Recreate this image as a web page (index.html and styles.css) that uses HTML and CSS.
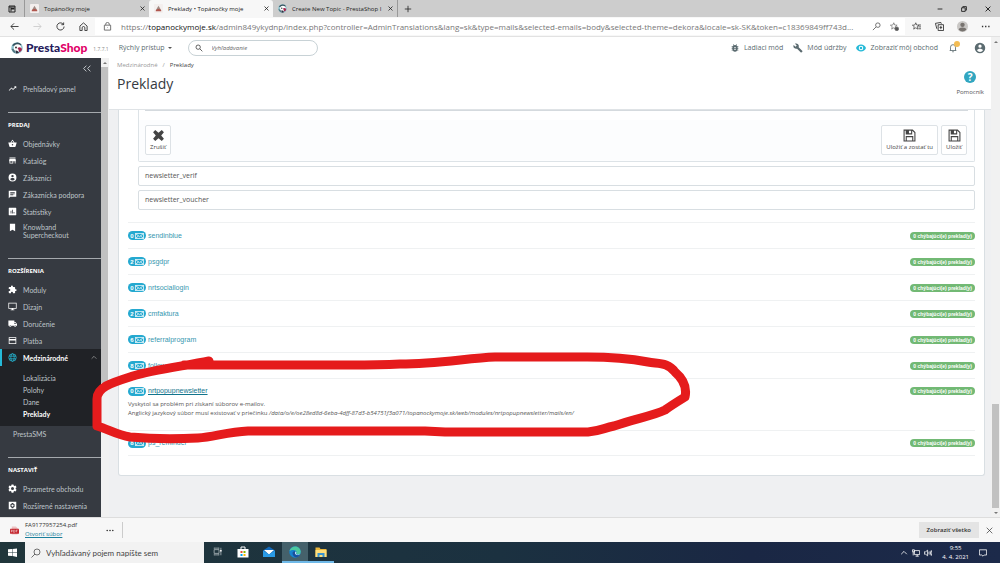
FILE: index.html
```html
<!DOCTYPE html>
<html lang="sk">
<head>
<meta charset="utf-8">
<meta name="viewport" content="width=device-width, initial-scale=1">
<title>Preklady • Topánočky moje</title>
<link rel="stylesheet" href="styles.css">
</head>
<body>
<svg class="defs" aria-hidden="true">
  <symbol id="close" viewBox="0 0 10 10"><path d="M1 1l8 8M9 1l-8 8" fill="none" stroke="currentColor" stroke-width="1.6"/></symbol>
  <symbol id="thinclose" viewBox="0 0 10 10"><path d="M1 1l8 8M9 1l-8 8" fill="none" stroke="currentColor" stroke-width="1"/></symbol>
  <symbol id="shoe" viewBox="0 0 10 10"><rect width="10" height="10" rx="1" fill="#f3efee"/><path d="M2 7L5 2l3 5z" fill="#a08a84"/><path d="M2 7q3-3 6 0v1H2z" fill="#b0564e"/></symbol>
  <symbol id="puffin" viewBox="0 0 24 24"><circle cx="12" cy="12" r="11.500" fill="#8fc3ce"/><path d="M2 7A12 12 0 0 1 21 5l-4 4-9-1z" fill="#34505c"/><circle cx="13" cy="12" r="7.500" fill="#fff"/><path d="M1 14q6-2 8 9Q3 21 1 14z" fill="#51747f"/><circle cx="10" cy="11" r="1.800" fill="#222"/><path d="M13 12q6-4 9 2-1 6-6 6 0-4-3-8z" fill="#a5264f"/><path d="M9 17q5-1 7 5l-6 1z" fill="#31303e"/></symbol>
  <symbol id="trend" viewBox="0 0 24 24"><path d="M16 6l2.300 2.300-4.900 4.900-4-4L2 16.600 3.400 18l6-6 4 4 6.300-6.300L22 12V6z"/></symbol>
  <symbol id="basket" viewBox="0 0 24 24"><path d="M17.200 9l-4.400-6.600a1 1 0 0 0-1.600 0L6.800 9H2a1 1 0 0 0-1 1.300l2.500 9.300A2 2 0 0 0 5.500 21h13a2 2 0 0 0 1.900-1.500L23 10.300A1 1 0 0 0 22 9zM9 9l3-4.400L15 9zm3 8a2 2 0 1 1 0-4 2 2 0 0 1 0 4z"/></symbol>
  <symbol id="store" viewBox="0 0 24 24"><path d="M20 4H4v2h16zm1 10v-2l-1-5H4l-1 5v2h1v6h10v-6h4v6h2v-6zm-9 4H6v-4h6z"/></symbol>
  <symbol id="account" viewBox="0 0 24 24"><path fill-rule="evenodd" d="M12 1.500a10.500 10.500 0 1 0 0 21 10.500 10.500 0 0 0 0-21zM12 5a3.200 3.200 0 1 1 0 6.500A3.200 3.200 0 0 1 12 5zm0 15a7 7 0 0 1-6-3.300c0-2 4-3.100 6-3.100s6 1.100 6 3.100A7 7 0 0 1 12 20z"/></symbol>
  <symbol id="chat" viewBox="0 0 24 24"><path fill-rule="evenodd" d="M2 2h20v16H6l-4 4zM6 6v2h12V6zm0 3v2h12V9zm0 3v2h8v-2z"/></symbol>
  <symbol id="stats" viewBox="0 0 24 24"><path fill-rule="evenodd" d="M3 2h18l1 1v18l-1 1H3l-1-1V3zM7 10v7h2v-7zm4-3v10h2V7zm4 6v4h2v-4z"/></symbol>
  <symbol id="bookmark" viewBox="0 0 24 24"><path d="M5 2h14v20l-7-4-7 4z"/></symbol>
  <symbol id="puzzle" viewBox="0 0 24 24"><path d="M20.500 11H19V7a2 2 0 0 0-2-2h-4V3.500a2.500 2.500 0 0 0-5 0V5H4a2 2 0 0 0-2 2v3.800h1.500a2.700 2.700 0 0 1 0 5.400H2V20c0 1.100.9 2 2 2h3.800v-1.500a2.700 2.700 0 0 1 5.400 0V22H17a2 2 0 0 0 2-2v-4h1.500a2.500 2.500 0 0 0 0-5z"/></symbol>
  <symbol id="desktop" viewBox="0 0 24 24"><path fill-rule="evenodd" d="M1 2h22v16h-9v2h3v2H7v-2h3v-2H1zm2 2v12h18V4z"/></symbol>
  <symbol id="truck" viewBox="0 0 24 24"><path fill-rule="evenodd" d="M1 4h16v4h3l4 5v5h-2a3 3 0 0 1-6 0H9a3 3 0 0 1-6 0H1zm16 6v3h4.500L19 10zM6 16.500a1.500 1.500 0 1 0 0 3 1.500 1.500 0 0 0 0-3zm13 0a1.500 1.500 0 1 0 0 3 1.500 1.500 0 0 0 0-3z"/></symbol>
  <symbol id="card" viewBox="0 0 24 24"><path fill-rule="evenodd" d="M2 3h20v18H2zm2 2v3h16V5zm0 7v7h16v-7z"/></symbol>
  <symbol id="globe" viewBox="0 0 24 24"><g fill="none" stroke="currentColor" stroke-width="2"><circle cx="12" cy="12" r="10"/><ellipse cx="12" cy="12" rx="4.500" ry="10"/><path d="M3 8.500h18M3 15.500h18"/></g></symbol>
  <symbol id="gear" viewBox="0 0 24 24"><path fill-rule="evenodd" d="M9.500 1h5l.6 3 2.300 1.300 2.900-1 2.500 4.300-2.300 2v2.800l2.300 2-2.500 4.300-2.900-1-2.300 1.300-.6 3h-5l-.6-3-2.300-1.300-2.900 1-2.500-4.300 2.300-2v-2.800l-2.300-2 2.500-4.300 2.900 1L8.900 4zM12 8a4 4 0 1 0 0 8 4 4 0 0 0 0-8z"/></symbol>
  <symbol id="gearbox" viewBox="0 0 24 24"><path fill-rule="evenodd" d="M2 2h20v20H2zm8 3l-.5 2-3 1.500v7l3 1.500.5 2h4l.5-2 3-1.500v-7l-3-1.500L14 5zm2 4a3 3 0 1 1 0 6 3 3 0 0 1 0-6z"/></symbol>
  <symbol id="search" viewBox="0 0 24 24"><g fill="none" stroke="currentColor" stroke-width="2.500"><circle cx="9.500" cy="9.500" r="6.500"/><path d="M14.500 14.500L22 22"/></g></symbol>
  <symbol id="bug" viewBox="0 0 24 24"><path fill-rule="evenodd" d="M20 8h-2.800a6 6 0 0 0-1.800-2L17 4.400 15.600 3l-2.200 2.200a6 6 0 0 0-2.800 0L8.400 3 7 4.400 8.600 6a6 6 0 0 0-1.800 2H4v2h2v2H4v2h2v2H4v2h2.800a6 6 0 0 0 10.400 0H20v-2h-2v-2h2v-2h-2v-2h2zm-6 8h-4v-2h4zm0-4h-4v-2h4z"/></symbol>
  <symbol id="wrench" viewBox="0 0 24 24"><path d="M22.700 19l-9.100-9.100c.9-2.300.4-5-1.500-6.900-2-2-5-2.400-7.400-1.300L9 6 6 9 1.600 4.700C.4 7.100.9 10.100 2.900 12.100c1.900 1.900 4.600 2.400 6.900 1.500l9.100 9.100c.4.4 1 .4 1.400 0l2.300-2.300c.5-.4.5-1.100.1-1.400z"/></symbol>
  <symbol id="eye" viewBox="0 0 24 24"><path fill-rule="evenodd" d="M12 3.500C6.500 3.500 2 7 0 12c2 5 6.500 8.500 12 8.500S22 17 24 12c-2-5-6.500-8.500-12-8.500zm0 14a5.500 5.500 0 1 1 0-11 5.500 5.500 0 0 1 0 11zM12 9a3 3 0 1 0 0 6 3 3 0 0 0 0-6z"/></symbol>
  <symbol id="bell" viewBox="0 0 24 24"><path d="M4 18h16M6 18v-8a6 6 0 0 1 12 0v8M10 21h4" fill="none" stroke="currentColor" stroke-width="2"/></symbol>
  <symbol id="mail" viewBox="0 0 12 8"><path d="M.6.600h10.800v6.800H.6zM.6.600L6 5 11.400.600M.6 7.400L4.500 4M11.400 7.400L7.500 4" fill="none" stroke="currentColor" stroke-width="1"/></symbol>
  <symbol id="save" viewBox="0 0 24 24"><path fill-rule="evenodd" d="M1 1h17l5 5v17H1zm2 2v18h2v-8h14v8h2V7l-4-4v7H5V3zm8 0v5h4V3zM7 15v6h10v-6z"/></symbol>
  <symbol id="cross" viewBox="0 0 24 24"><path d="M6 2l6 5 6-5 4 4-5 6 5 6-4 4-6-5-6 5-4-4 5-6-5-6z"/></symbol>
  <symbol id="star" viewBox="0 0 24 24"><path d="M10 2l2.500 6 6.500.500-5 4 1.500 6.500-5.500-3.500L4.500 19 6 12.500l-5-4L7.500 8z" fill="none" stroke="currentColor" stroke-width="1.800"/></symbol>
</svg>

<header class="tabs">
  <button class="tabmenu" aria-label="Karty"><svg viewBox="0 0 16 16"><path fill="none" stroke="currentColor" stroke-width="2" d="M2 2h12v12H2zM2 4h12M6 5v8"/><path d="M6 6h7v3H6z"/></svg></button>
  <div class="tab"><svg class="fav"><use href="#shoe"/></svg><span>Topánočky moje</span><button aria-label="Zavrieť kartu 1"><svg><use href="#close"/></svg></button></div>
  <div class="tab active"><svg class="fav"><use href="#shoe"/></svg><span>Preklady • Topánočky moje</span><button aria-label="Zavrieť kartu 2"><svg><use href="#close"/></svg></button></div>
  <div class="tab"><svg class="fav"><use href="#puffin"/></svg><span>Create New Topic - PrestaShop I</span><button aria-label="Zavrieť kartu 3"><svg><use href="#close"/></svg></button></div>
  <button class="newtab" aria-label="Nová karta"><svg viewBox="0 0 10 10"><path d="M5 1v8M1 5h8" stroke="currentColor"/></svg></button>
  <div class="wincontrols">
    <button aria-label="Minimalizovať"><svg viewBox="0 0 10 10"><path d="M1 5h8" stroke="currentColor" stroke-width="1.500"/></svg></button>
    <button aria-label="Obnoviť"><svg viewBox="0 0 10 10"><path d="M1 3h6v6H1zM3 3V1h6v6H7" fill="none" stroke="currentColor" stroke-width="1.500"/></svg></button>
    <button aria-label="Zavrieť"><svg><use href="#close"/></svg></button>
  </div>
</header>

<nav class="toolbar" aria-label="Prehliadač">
  <button aria-label="Späť"><svg viewBox="0 0 20 20"><path d="M19 10H2M9 3l-7 7 7 7"/></svg></button>
  <button class="off" aria-label="Dopredu"><svg viewBox="0 0 20 20"><path d="M1 10h17M11 3l7 7-7 7"/></svg></button>
  <button aria-label="Obnoviť stránku"><svg viewBox="0 0 20 20"><path d="M17 6a8 8 0 1 0 1 4M17 1v5h-5"/></svg></button>
  <button aria-label="Domov"><svg viewBox="0 0 20 20"><path d="M2 9l8-7 8 7v10h-5v-6a3 3 0 0 0-6 0v6H2z"/></svg></button>
  <div class="address">
    <svg viewBox="0 0 20 20"><path d="M3 7h14v11H3zM6 7V5a4 4 0 0 1 8 0v2M10 12v1"/></svg>
    <span class="url">https://<b>topanockymoje.sk</b>/admin849ykydnp/index.php?controller=AdminTranslations&amp;lang=sk&amp;type=mails&amp;selected-emails=body&amp;selected-theme=dekora&amp;locale=sk-SK&amp;token=c18369849ff743d...</span>
    <svg viewBox="0 0 20 20"><circle cx="13" cy="7" r="5"/><path d="M9 11l-7 7"/></svg>
    <svg viewBox="0 0 24 24"><use href="#star"/><circle cx="18" cy="18" r="5" fill="#555"/></svg>
  </div>
  <button aria-label="Obľúbené"><svg viewBox="0 0 24 24"><use href="#star"/><path d="M17 8h7M17 13h7M17 18h7"/></svg></button>
  <button aria-label="Kolekcie"><svg viewBox="0 0 20 20"><path d="M7 6h12v13H7zM4 15L1 3l12-2 1 3M13 9v7M10 12h6"/></svg></button>
  <button aria-label="Profil"><svg class="avatar" viewBox="0 0 20 20"><circle cx="10" cy="10" r="10" fill="#c9c7c5" stroke="none"/><circle cx="10" cy="7" r="4" fill="#77736f" stroke="none"/><path d="M3 16q1-4 7-4t7 4q-7 6-14 0z" fill="#77736f" stroke="none"/></svg></button>
  <button aria-label="Ďalšie"><svg viewBox="0 0 20 20"><path d="M2 10h3M9 10h3M16 10h3" stroke-width="3"/></svg></button>
</nav>

<div class="viewport">
  <div class="app">
    <header class="psbar">
      <a class="logo" href="#"><svg><use href="#puffin"/></svg><span>Presta<em>Shop</em></span></a>
      <small>1.7.7.1</small>
      <button class="quick">Rýchly prístup <i class="caret"></i></button>
      <label class="pssearch"><svg><use href="#search"/></svg><input type="search" placeholder="Vyhľadávanie" aria-label="Vyhľadávanie"></label>
      <div class="pslinks">
        <a href="#"><svg><use href="#bug"/></svg>Ladiaci mód</a>
        <a href="#"><svg><use href="#wrench"/></svg>Mód údržby</a>
        <a href="#"><svg class="cyan"><use href="#eye"/></svg>Zobraziť môj obchod</a>
        <button class="bell" aria-label="Oznámenia"><svg><use href="#bell"/></svg><i></i></button>
        <button class="user" aria-label="Účet"><svg><use href="#account"/></svg></button>
      </div>
    </header>
    <div class="body">
      <nav class="sidebar" aria-label="Menu">
        <button class="collapse" aria-label="Zbaliť menu"><svg viewBox="0 0 14 12"><path d="M6 1L1 6l5 5M13 1L8 6l5 5" fill="none" stroke="currentColor" stroke-width="1.500"/></svg></button>
        <a class="item first" href="#"><svg><use href="#trend"/></svg>Prehľadový panel</a>
        <h2>Predaj</h2>
        <a class="item" href="#"><svg><use href="#basket"/></svg>Objednávky</a>
        <a class="item" href="#"><svg><use href="#store"/></svg>Katalóg</a>
        <a class="item" href="#"><svg><use href="#account"/></svg>Zákazníci</a>
        <a class="item" href="#"><svg><use href="#chat"/></svg>Zákaznícka podpora</a>
        <a class="item" href="#"><svg><use href="#stats"/></svg>Štatistiky</a>
        <a class="item two" href="#"><svg><use href="#bookmark"/></svg>Knowband Supercheckout</a>
        <h2>Rozšírenia</h2>
        <a class="item" href="#"><svg><use href="#puzzle"/></svg>Moduly</a>
        <a class="item" href="#"><svg><use href="#desktop"/></svg>Dizajn</a>
        <a class="item" href="#"><svg><use href="#truck"/></svg>Doručenie</a>
        <a class="item" href="#"><svg><use href="#card"/></svg>Platba</a>
        <div class="open">
          <a class="item current" href="#"><svg><use href="#globe"/></svg>Medzinárodné<svg class="chev" viewBox="0 0 10 10"><path d="M1 7l4-4 4 4" fill="none" stroke="currentColor"/></svg></a>
          <a class="sub" href="#">Lokalizácia</a>
          <a class="sub" href="#">Polohy</a>
          <a class="sub" href="#">Dane</a>
          <a class="sub on" href="#">Preklady</a>
        </div>
        <a class="plain" href="#">PrestaSMS</a>
        <h2>Nastaviť</h2>
        <a class="item" href="#"><svg><use href="#gear"/></svg>Parametre obchodu</a>
        <a class="item" href="#"><svg><use href="#gearbox"/></svg>Rozšírené nastavenia</a>
      </nav>
      <div class="sidescroll"><i class="up"></i><i class="thumb"></i></div>
      <main>
        <div class="pagehead">
          <div>
            <p class="crumbs"><a href="#">Medzinárodné</a><span>/</span><a class="here" href="#">Preklady</a></p>
            <h1>Preklady</h1>
          </div>
          <a class="help" href="#"><b>?</b>Pomocník</a>
        </div>
        <section class="panel">
          <div class="editor">
            <div class="edge"></div>
            <div class="actions">
              <button><svg><use href="#cross"/></svg>Zrušiť</button>
              <button class="push"><svg><use href="#save"/></svg>Uložiť a zostať tu</button>
              <button><svg><use href="#save"/></svg>Uložiť</button>
            </div>
          </div>
          <a class="fold" href="#">newsletter_verif</a>
          <a class="fold" href="#">newsletter_voucher</a>
          <ul class="modules">
            <li><a href="#"><span class="count">0<svg><use href="#mail"/></svg></span>sendinblue</a><span class="missing">0 chýbajúci(e) preklad(y)</span></li>
            <li><a href="#"><span class="count">2<svg><use href="#mail"/></svg></span>psgdpr</a><span class="missing">0 chýbajúci(e) preklad(y)</span></li>
            <li><a href="#"><span class="count">0<svg><use href="#mail"/></svg></span>nrtsociallogin</a><span class="missing">0 chýbajúci(e) preklad(y)</span></li>
            <li><a href="#"><span class="count">2<svg><use href="#mail"/></svg></span>cmfaktura</a><span class="missing">0 chýbajúci(e) preklad(y)</span></li>
            <li><a href="#"><span class="count">6<svg><use href="#mail"/></svg></span>referralprogram</a><span class="missing">0 chýbajúci(e) preklad(y)</span></li>
            <li><a href="#"><span class="count">8<svg><use href="#mail"/></svg></span>followup</a><span class="missing">0 chýbajúci(e) preklad(y)</span></li>
            <li class="expanded"><a href="#"><span class="count">0<svg><use href="#mail"/></svg></span><u>nrtpopupnewsletter</u></a><span class="missing">0 chýbajúci(e) preklad(y)</span>
              <p>Vyskytol sa problém pri získaní súborov e-mailov.<br>Anglický jazykový súbor musí existovať v priečinku <em>/data/o/e/oe28ed8d-6eba-4dff-87d3-b54751f3a071/topanockymoje.sk/web/modules/nrtpopupnewsletter/mails/en/</em></p></li>
            <li><a href="#"><span class="count">8<svg><use href="#mail"/></svg></span>ps_reminder</a><span class="missing">0 chýbajúci(e) preklad(y)</span></li>
          </ul>
        </section>
      </main>
    </div>
  </div>
  <div class="pagescroll"><i class="up"></i><i class="thumb"></i><i class="down"></i></div>
  <svg class="marker" viewBox="0 37 1000 480" aria-hidden="true"><path d="M209 361C184 366 152 370 133 376C111 383 97 387 97 399V426C108 429 117 435 130 437C152 439 178 439 198 438C214 437 227 432 248 431H425L445 432H588C600 431 604 428 614 426C633 419 653 416 665 410Q672 405 685 397Q688 383 675 372C668 362 658 364 648 362C627 358 605 357 587 357H495C468 358 438 364 400 364Q380 365 350 365H184"/></svg>
</div>

<footer class="downloads">
  <svg class="pdf" viewBox="0 0 20 20"><path d="M4 1h9l4 4v14H4z" fill="#eec4c4"/><rect y="6" width="20" height="11" rx="1" fill="#c4262e"/><path d="M3 14V9h2v3H3M8 9v5h2l1-1v-3l-1-1zM14 14V9h3M14 11h2" fill="none" stroke="#fff"/></svg>
  <div class="file"><span>FA9177957254.pdf</span><a href="#">Otvoriť súbor</a></div>
  <button class="more" aria-label="Možnosti súboru"><svg viewBox="0 0 20 6"><circle cx="3" cy="3" r="2"/><circle cx="10" cy="3" r="2"/><circle cx="17" cy="3" r="2"/></svg></button>
  <button class="all">Zobraziť všetko</button>
  <button class="shut" aria-label="Zavrieť panel"><svg><use href="#thinclose"/></svg></button>
</footer>

<footer class="taskbar">
  <button class="start" aria-label="Štart"><svg viewBox="0 0 20 20"><path d="M0 3l9-1v8H0zM10 2l10-1v9H10zM0 11h9v7l-9-1zM10 11h10v9l-10-2z" fill="#fff"/></svg></button>
  <label class="tasksearch"><svg viewBox="0 0 20 20"><g fill="none" stroke="#444" stroke-width="1.500"><circle cx="12" cy="8" r="6"/><path d="M8 12l-7 7"/></g></svg><input type="text" placeholder="Vyhľadávaný pojem napíšte sem" aria-label="Vyhľadávaný pojem"></label>
  <div class="apps">
    <button aria-label="Zobrazenie úloh"><svg viewBox="0 0 24 24"><path d="M3 7h13v10H3zM3 4V2M16 4V2M3 20v2M16 20v2M3 3h13M3 21h13M21 2v20" fill="none" stroke="#dfe6e8" stroke-width="1.600"/><path d="M19 8h4v4h-4z" fill="#fff"/></svg></button>
    <button aria-label="Obchod"><svg viewBox="0 0 24 24"><path d="M8 7V2h8v5" fill="none" stroke="#fff" stroke-width="2"/><path d="M1 6h22v17H1z" fill="#fff"/><path d="M7 10h4v4H7z" fill="#e8512f"/><path d="M13 10h4v4h-4z" fill="#7fba00"/><path d="M7 16h4v4H7z" fill="#00a4ef"/><path d="M13 16h4v4h-4z" fill="#ffb900"/></svg></button>
    <button aria-label="Pošta"><svg viewBox="0 0 24 24"><path d="M0 9L12 1l12 8v13H0z" fill="#1268b8"/><path d="M2 8h20l-10 9z" fill="#fff"/><path d="M0 9l12 8 12-8v13H0z" fill="#2a9be6"/></svg></button>
    <button class="focus" aria-label="Edge"><svg viewBox="0 0 24 24"><circle cx="12" cy="12" r="11.500" fill="#1683cf"/><path d="M1 10C3-2 22-3 23.500 11c0 6-7 7-9 4 2-4-1-7-5-7s-7 1-8.500 2z" fill="#4cc9a0"/><path d="M7 14c1-5 7-5 7 0-2 5 4 6 8 3-3 8-15 7-15-3z" fill="#1b4f9c"/><path d="M13 11c3 1 1 5 1 5 3 3 7 1 9-2-2 6-11 5-11 0z" fill="#dff4ff"/></svg></button>
    <button class="running" aria-label="Prieskumník"><svg viewBox="0 0 24 24"><path d="M1 3h8l2 3h12v16H1z" fill="#e9b53a"/><path d="M1 8h22v14H1z" fill="#ffdf7b"/><path d="M5 14h14v8h-4v-4H9v4H5z" fill="#3a94d0"/></svg></button>
  </div>
  <div class="tray">
    <svg viewBox="0 0 20 20"><path d="M3 13l7-7 7 7"/></svg>
    <svg viewBox="0 0 20 20"><path d="M6 4h13v10H6zM9 18h8M13 14v4M1 2h5v5H1zM3 7v9"/></svg>
    <svg viewBox="0 0 20 20"><path d="M1 7h3l5-4v14l-5-4H1zM12 7q2 3 0 6M15 5q3 5 0 10M18 3q4 7 0 14"/></svg>
    <time>9:55<br>4. 4. 2021</time>
    <svg class="note" viewBox="0 0 20 20"><path d="M1 2h18v13h-6l-3 3-3-3H1z"/></svg>
  </div>
</footer>
</body>
</html>
```
FILE: styles.css
```css
* { box-sizing: border-box; }
body {
  margin: 0;
  height: 100vh;
  min-height: 540px;
  display: flex;
  flex-direction: column;
  overflow: hidden;
  font: 7px/10px "Open Sans", "Noto Sans", sans-serif;
  color: #555;
  background: #eff0f2;
}
button, input { font: inherit; color: inherit; border: 0; padding: 0; background: none; }
a { color: inherit; text-decoration: none; }
svg { width: 10px; height: 10px; flex: none; fill: currentColor; display: block; }
i { display: block; flex: none; }
p, h1, h2, ul { margin: 0; padding: 0; }
.defs { position: absolute; width: 0; height: 0; }

/* browser tabs */
.tabs { display: flex; height: 17px; flex: none; background: #cdcdcd; color: #222; font-size: 6px; }
.tabmenu { width: 25px; display: grid; place-items: center; border-right: 1px solid #999; }
.tabmenu svg { width: 8px; height: 8px; }
.tab { display: flex; align-items: center; width: 124px; padding: 0 4px 0 5px; gap: 5px; }
.tab span { flex: 1; white-space: nowrap; }
.tab button svg { width: 5px; height: 5px; }
.tab .fav { width: 9px; height: 9px; }
.tab.active { background: #f7f7f7; border-radius: 3px 3px 0 0; }
.newtab { width: 20px; display: grid; place-items: center; border-left: 1px solid #999; }
.newtab svg { width: 8px; height: 8px; }
.wincontrols { margin-left: auto; display: flex; }
.wincontrols button { width: 24px; display: grid; place-items: center; }
.wincontrols svg { width: 6px; height: 6px; }

/* address bar */
.toolbar { display: flex; align-items: center; height: 20px; flex: none; background: #f7f7f7; border-bottom: 1px solid #e2e2e2; padding: 0 3px; color: #333; }
.toolbar svg { fill: none; stroke: currentColor; stroke-width: 2; width: 9px; height: 9px; }
.toolbar > button { width: 23px; display: grid; place-items: center; }
.toolbar .off { color: #ccc; }
.toolbar .avatar { width: 11px; height: 11px; }
.address { flex: 1; min-width: 0; display: flex; align-items: center; gap: 9px; height: 17px; background: #fff; padding: 0 6px 0 8px; color: #666; }
.url { flex: 1; white-space: nowrap; font-size: 8px; line-height: 14px; color: #777; }
.url b { font-weight: 400; color: #111; }

.viewport { flex: 1; min-height: 0; display: flex; position: relative; }
.app { flex: 1; min-width: 0; display: flex; flex-direction: column; background: #fff; }
.marker { position: absolute; inset: 0; width: 100%; height: 100%; pointer-events: none; }
.marker path { fill: none; stroke: #e51b1c; stroke-width: 9; stroke-linecap: round; stroke-linejoin: round; }

/* shop top bar */
.psbar { display: flex; align-items: center; height: 21px; flex: none; padding: 0 5px 0 11px; color: #5b6b70; }
.logo { display: flex; align-items: center; gap: 3px; font: 900 12px/16px Lato, sans-serif; color: #251b5b; }
.logo svg { width: 12px; height: 12px; }
.logo em { font-style: normal; color: #df0067; }
.psbar small { font-size: 5px; margin: 2px 10px 0 6px; color: #888; }
.quick { display: flex; align-items: center; gap: 3px; margin-right: 16px; }
.caret { border: 2px solid transparent; border-top-color: #555; border-bottom: 0; }
.pssearch { display: flex; align-items: center; gap: 9px; width: 130px; height: 16px; border: 1px solid #c8d2d6; border-radius: 8px; padding: 0 6px; }
.pssearch svg { width: 8px; height: 8px; color: #444; }
.pssearch input { width: 100%; min-width: 0; font-size: 6px; font-style: italic; outline: 0; }
input::placeholder { color: #666; opacity: 1; }
.pslinks { margin-left: auto; display: flex; align-items: center; gap: 10px; }
.pslinks a { display: flex; align-items: center; gap: 4px; }
.pslinks .cyan { color: #25b9d7; }
.bell { position: relative; }
.bell i { position: absolute; right: -2px; top: -2px; width: 6px; height: 6px; border-radius: 50%; background: #f3bd55; }
.user svg { width: 12px; height: 12px; }
.user { margin-left: 6px; }

/* side menu */
.body { flex: 1; min-height: 0; display: flex; }
.sidebar { width: 101px; flex: none; background: #363a41; color: #bfc5c9; overflow: hidden; font-family: Lato, "Open Sans", sans-serif; }
.collapse { display: block; margin: 7px 10px 8px auto; color: #d5dadd; }
.collapse svg { width: 8px; height: 7px; }
.item { display: flex; align-items: center; height: 17px; gap: 6px; padding-left: 8px; line-height: 8px; }
.item svg { width: 9px; height: 9px; color: #fff; }
.item.first { margin-bottom: 15px; }
.item.two { height: 20px; padding-right: 20px; align-items: flex-start; padding-top: 3px; margin-bottom: 18px; }
.sidebar h2 { margin-left: 8px; padding: 7px 0 5px; border-top: 1px solid #a5a9ad; font: 700 6px/10px "Open Sans", sans-serif; color: #fff; text-transform: uppercase; }
.open { background: #202226; padding-bottom: 6px; margin-bottom: 3px; }
.item.current { border-left: 2px solid #25b9d7; padding-left: 6px; color: #fff; font-weight: 700; margin-bottom: 6px; }
.item.current svg { color: #25b9d7; }
.item.current .chev { margin: 0 4px 0 auto; width: 6px; color: #bbb; }
.sub { display: block; padding-left: 23px; line-height: 12px; }
.sub.on { color: #fff; font-weight: 700; }
.plain { display: block; padding-left: 13px; margin-bottom: 18px; }
.sidescroll { width: 8px; flex: none; background: #f1f1f1; }
.sidescroll .thumb { height: 316px; margin: 0 1px 0 0; background: #c1c1c1; }
.up { height: 9px; display: grid; place-items: center; }
.up::before { content: ""; border: 2px solid transparent; border-bottom-color: #777; border-top: 0; }

/* page */
main { flex: 1; min-width: 0; background: #eff0f2; }
.pagehead { display: flex; justify-content: space-between; height: 52px; background: #fff; border-bottom: 1px solid #dfe3e6; padding: 2px 7px 0 8px; }
.crumbs { display: flex; gap: 5px; color: #999; font-size: 6px; }
.crumbs .here { color: #444; }
h1 { font-size: 14px; line-height: 20px; font-weight: 400; color: #363a41; margin-top: 4px; }
.help { display: flex; flex-direction: column; align-items: center; gap: 4px; padding-top: 11px; font-size: 6px; }
.help b { width: 12px; height: 12px; border-radius: 50%; background: #31a6c0; color: #fff; font-size: 10px; line-height: 12px; text-align: center; }
.panel { background: #fff; margin: 0 6px 0 9px; padding: 0 9px 19px; border: 1px solid #d9dfe3; border-top: 0; border-radius: 0 0 3px 3px; }
.editor { margin-left: 10px; border: 1px solid #dde3e7; border-top: 0; border-radius: 0 0 2px 2px; }
.edge { margin: 0 6px; height: 10px; border-top: 1px solid #d5dade; }
.actions { display: flex; gap: 3px; padding: 5px 7px 6px 6px; background: #fcfdfe; }
.actions button { display: flex; flex-direction: column; align-items: center; justify-content: flex-end; gap: 1px; height: 30px; padding: 0 4px 2px; background: #fff; border: 1px solid #dde2e6; border-radius: 2px; font-size: 6px; line-height: 9px; color: #444; }
.actions svg { width: 13px; height: 13px; }
.actions .push { margin-left: auto; }
.fold { display: block; margin: 4px 0 0 10px; height: 20px; padding-left: 6px; border: 1px solid #d8dee2; border-radius: 2px; line-height: 18px; }
.modules { list-style: none; margin-top: 12px; }
.modules li { display: flex; flex-wrap: wrap; align-items: center; justify-content: space-between; height: 26px; border-top: 1px solid #eff1f2; }
.modules li:last-child { border-bottom: 1px solid #eff1f2; }
.modules a { display: flex; align-items: center; gap: 2px; color: #3797b0; font: 7px/12px "Liberation Sans", sans-serif; }
.modules u { color: #12748c; }
.count { display: flex; align-items: center; justify-content: center; gap: 1px; width: 18px; height: 9px; border-radius: 5px; background: #25a9d0; color: #fff; font-size: 6px; font-weight: 700; }
.count svg { width: 9px; height: 6px; }
.missing { background: #72b974; color: #fff; border-radius: 4px; padding: 0 3px; font: 700 5px/8px "Liberation Sans", sans-serif; }
.modules .expanded { height: 52px; align-content: flex-start; padding-top: 6px; }
.expanded p { width: 100%; line-height: 9px; font-size: 6px; margin-top: 3px; }
.pagescroll { width: 9px; flex: none; display: flex; flex-direction: column; background: #f1f1f1; }
.pagescroll .thumb { margin: auto 1px 0; height: 104px; background: #c1c1c1; }
.down { height: 9px; display: grid; place-items: center; }
.down::before { content: ""; border: 2px solid transparent; border-top-color: #777; border-bottom: 0; }

/* downloads */
.downloads { display: flex; align-items: center; height: 25px; flex: none; background: #f7f7f7; border-top: 1px solid #ddd; padding: 0 7px 0 10px; color: #333; }
.pdf { width: 9px; height: 9px; }
.file { display: flex; flex-direction: column; margin-left: 6px; line-height: 9px; font-size: 6px; width: 77px; }
.file a { color: #1a7f9c; text-decoration: underline; }
.more { height: 16px; width: 21px; display: flex; align-items: center; padding-left: 4px; border-right: 1px solid #ccc; }
.more svg { width: 8px; height: 3px; }
.all { margin-left: auto; background: #e4e4e4; padding: 0 8px; height: 16px; font-weight: 600; font-size: 6px; }
.shut { margin-left: 7px; }
.shut svg { width: 7px; height: 7px; }

/* taskbar */
.taskbar { display: flex; align-items: stretch; height: 21px; flex: none; background: linear-gradient(90deg, #20363b, #1b3140 50%, #1a2744 75%, #1c2a4a); color: #fff; }
.start { width: 25px; display: grid; place-items: center; }
.start svg { width: 9px; height: 9px; }
.tasksearch { width: 179px; display: flex; align-items: center; gap: 5px; padding-left: 6px; background: #f2f2f2; }
.tasksearch input { width: 100%; min-width: 0; font: 8px/12px Lato, sans-serif; outline: 0; }
.tasksearch input::placeholder { color: #444; }
.apps { display: flex; }
.apps button { width: 26px; display: grid; place-items: center; border-bottom: 2px solid transparent; }
.apps svg { width: 12px; height: 12px; }
.apps button:first-child svg { width: 9px; height: 9px; }
.apps .focus { background: #45616b; border-color: #6fb9e8; }
.apps .running { border-color: #6fb9e8; }
.tray { margin-left: auto; display: flex; align-items: center; gap: 4px; padding-right: 13px; }
.tray svg { width: 8px; height: 8px; fill: none; stroke: #fff; stroke-width: 2; }
.tray time { font-size: 6px; line-height: 9px; text-align: center; margin: 0 6px; }
```
